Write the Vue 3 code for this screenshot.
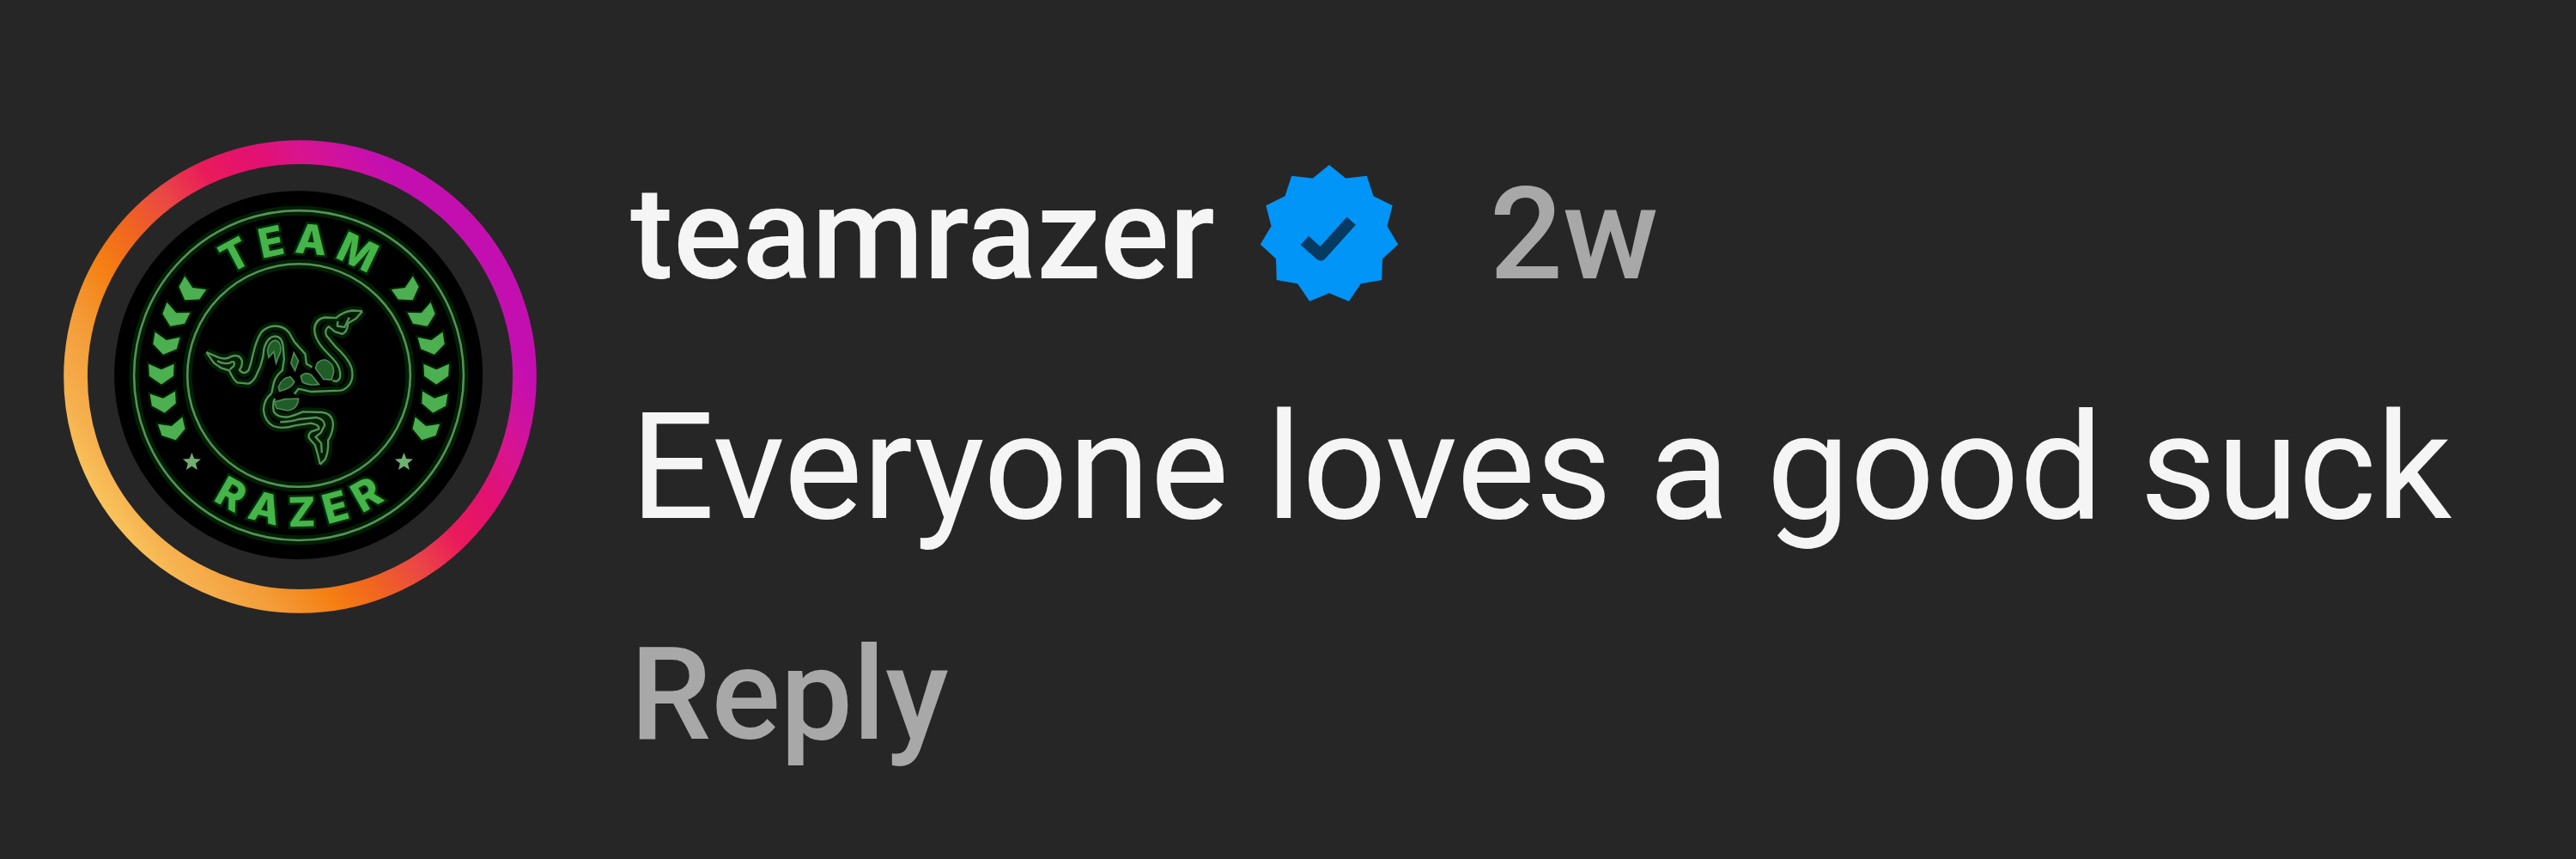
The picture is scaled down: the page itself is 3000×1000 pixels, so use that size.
<template>
  <main class="comment">
    <svg class="avatar" viewBox="38 33 1490 1490" role="img" aria-label="teamrazer">
      <defs>
        <linearGradient id="story" gradientUnits="userSpaceOnUse" x1="168" y1="1199" x2="1398" y2="357">
          <stop v-for="s in ringStops" :key="s.at" :offset="s.at" :stop-color="s.color" />
        </linearGradient>
        <path id="arc-top" d="M395 774 A384 384 0 0 1 1163 774" />
        <path id="arc-bottom" d="M303 774 A476 476 0 0 0 1255 774" />
        <path id="chevron" d="M-40 -30 L0 -12 L40 -30 L38 8 L0 34 L-38 8 Z" />
      </defs>

      <circle cx="783" cy="778" r="707" fill="none" stroke="url(#story)" stroke-width="75" />
      <circle cx="778" cy="773" r="580" fill="#000" />

      <g class="glow">
        <circle cx="779" cy="774" r="519" />
        <circle cx="779" cy="774" r="351" />
      </g>
      <g class="line">
        <circle cx="779" cy="774" r="519" />
        <circle cx="779" cy="774" r="351" />
      </g>

      <text class="crest" text-anchor="middle" dx="0 26 26 26">
        <textPath href="#arc-top" startOffset="50%">TEAM</textPath>
      </text>
      <text class="crest" text-anchor="middle" dx="0 36 36 36 36">
        <textPath href="#arc-bottom" startOffset="50%">RAZER</textPath>
      </text>

      <g class="leaf">
        <use v-for="c in chevrons" :key="c" href="#chevron" :transform="c" />
      </g>
      <polygon class="star" :points="star(442, 1047, 30, 13, 5)" />
      <polygon class="star" :points="star(1110, 1047, 30, 13, 5)" />

      <g transform="translate(432 487) scale(0.9)">
        <g v-for="layer in ['glow', 'line']" :key="layer" :class="layer">
          <path v-for="d in snakes" :key="d" :d="d" />
        </g>
        <g class="scales">
          <path v-for="d in scales" :key="d" :d="d" />
        </g>
      </g>
    </svg>

    <div class="body">
      <header class="meta">
        <a class="username" href="#">teamrazer</a>
        <svg class="badge" viewBox="-82 -82 164 164" role="img" aria-label="Verified">
          <polygon :points="star(0, 0, 82, 69, 11)" fill="#0095f6" />
          <path
            d="M-29 7 L-10 24 L26 -16"
            fill="none"
            stroke="#063a60"
            stroke-width="14"
            stroke-linejoin="round"
          />
        </svg>
        <time class="age">2w</time>
      </header>
      <p class="text">Everyone loves a good suck</p>
      <button class="reply" type="button">Reply</button>
    </div>
  </main>
</template>

<script setup>
const ringStops = [
  { at: 0, color: '#f9c45c' },
  { at: 0.06, color: '#f6b250' },
  { at: 0.18, color: '#f39c38' },
  { at: 0.29, color: '#f57f12' },
  { at: 0.38, color: '#f0651f' },
  { at: 0.48, color: '#ea4745' },
  { at: 0.58, color: '#ea1a5c' },
  { at: 0.68, color: '#e3116f' },
  { at: 0.77, color: '#d8148f' },
  { at: 0.9, color: '#c40fb0' },
]

// x, y, rotation of the left row; the right row is its mirror
const leaves = [
  [438, 508, 32],
  [388, 588, 24],
  [359, 675, 12],
  [346, 768, 0],
  [353, 858, -6],
  [382, 945, -16],
]
const chevrons = leaves.flatMap(([x, y, a]) => [
  `translate(${x} ${y}) rotate(${a})`,
  `translate(${1558 - x} ${y}) rotate(${-a})`,
])

function star(cx, cy, outer, inner, count) {
  const points = []
  for (let i = 0; i < count * 2; i++) {
    const r = i % 2 ? inner : outer
    const a = (Math.PI * i) / count
    points.push(`${(cx + r * Math.sin(a)).toFixed(1)},${(cy - r * Math.cos(a)).toFixed(1)}`)
  }
  return points.join(' ')
}

const snakes = [
  // left snake
  'M62 238 L105 256 Q132 266 150 252 Q178 244 186 266 Q190 284 178 300 Q194 320 210 300 Q218 280 224 250 Q236 196 254 168 Q276 146 302 146 Q334 146 352 170 L370 202 L408 244 L412 278 L432 290',
  'M62 238 L88 275 L112 292 L142 302 Q156 334 170 344 L208 348 Q226 344 238 316 L252 284 Q262 256 264 224 Q276 184 302 182 Q326 182 330 214 L334 262 L328 302 Q306 318 298 344 L290 382',
  'M100 268 Q128 284 150 272 Q164 268 158 286 L144 298',
  // right snake
  'M608 94 L572 92 Q540 96 516 118 L478 116 Q444 120 440 156 Q440 190 470 224 L508 264 Q534 292 530 326 Q522 346 504 336',
  'M608 94 L586 120 L558 136 Q554 170 538 174 L512 166 L490 148 Q474 158 482 180 L512 216 Q560 260 570 292 Q578 324 566 346 Q550 370 530 372 L430 376 L384 366 L370 384',
  'M522 130 L520 146 L546 150 L562 116',
  // bottom snake
  'M290 382 Q264 402 262 440 Q266 480 296 496 Q328 508 372 494 L428 486 Q458 492 456 506 L428 516 Q414 530 424 542 L442 562 L452 596 L460 630',
  'M460 630 L478 612 Q490 584 488 546 Q510 510 504 478 Q496 450 466 448 L400 446 Q378 456 350 464 Q312 468 298 446 Q292 414 302 400',
  'M320 482 Q356 482 386 472 L446 466 Q476 472 476 494 L462 520 L444 534 L464 556 L466 590',
]

const scales = [
  'M368 240 L384 268 L372 302 L358 276 Z',
  'M392 322 Q410 304 430 318 L456 350 Q420 356 398 342 Z',
  'M314 360 Q326 326 356 324 L370 342 Q358 366 318 374 Z',
  'M444 294 Q448 264 478 264 Q508 276 508 306 L500 334 L472 332 Z',
  'M300 412 L336 402 L384 400 Q382 438 346 442 L308 434 Z',
  'M276 232 Q280 200 304 196 Q324 200 322 234 L306 276 L298 236 L280 256 Z',
]
</script>

<style>
body {
  margin: 0;
  background: #262626;
}
</style>

<style scoped>
.comment {
  display: flex;
  align-items: flex-start;
  gap: 109px;
  min-height: 100vh;
  box-sizing: border-box;
  padding: 163px 74px 80px;
  background: #262626;
  color: #f5f5f5;
  font-family: Roboto, "Liberation Sans", sans-serif;
}

.avatar {
  flex: none;
  width: 551px;
  height: 551px;
}

.line,
.glow {
  fill: none;
  stroke: #55915a;
  stroke-width: 7;
  stroke-linejoin: round;
}

.glow {
  stroke: #021f04;
  stroke-width: 30;
}

.crest {
  fill: #45b549;
  stroke: #032a05;
  stroke-width: 14;
  paint-order: stroke;
  font-family: Inter, sans-serif;
  font-size: 128px;
  font-weight: 800;
}

.leaf {
  fill: #4caf50;
  stroke: #021f04;
  stroke-width: 12;
  paint-order: stroke;
}

.star {
  fill: #6fb070;
}

.scales {
  fill: #1f5c27;
  stroke: #4b8a50;
  stroke-width: 5;
}

.body {
  flex: 1;
  min-width: 0;
  padding-top: 22px;
}

.meta {
  display: flex;
  align-items: center;
  margin-bottom: 76px;
  font-size: 150px;
  font-weight: 500;
  line-height: 176px;
}

.username {
  color: inherit;
  text-decoration: none;
}

.badge {
  flex: none;
  width: 162px;
  height: 162px;
  margin: 0 106px 0 52px;
}

.age,
.reply {
  color: #a8a8a8;
}

.text {
  margin: 0 0 70px;
  font-size: 173px;
  line-height: 214px;
}

.reply {
  display: block;
  padding: 0;
  border: 0;
  background: none;
  font-family: inherit;
  font-size: 150px;
  font-weight: 500;
  line-height: 176px;
  cursor: pointer;
}
</style>
